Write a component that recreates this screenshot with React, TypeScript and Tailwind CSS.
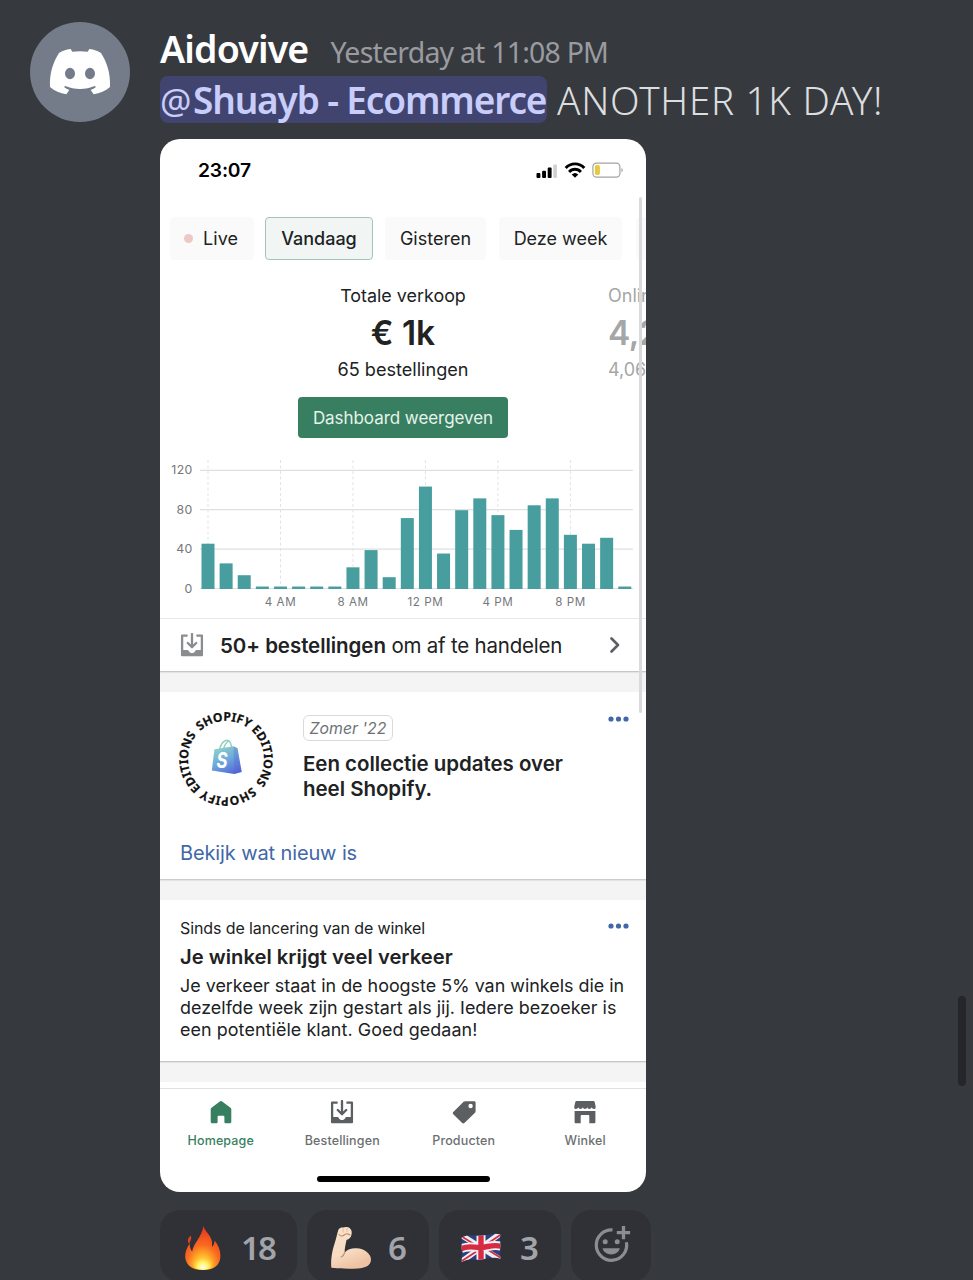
import type { ReactNode } from "react";

const hourly = [46, 26, 14, 2.5, 2.5, 2.5, 2.5, 2.5, 22, 39.5, 12, 72, 104, 36, 80, 92, 75, 60, 85, 92, 55, 46, 52, 2.5];
const hourLabels = [
  { hour: 4, label: "4 AM" },
  { hour: 8, label: "8 AM" },
  { hour: 12, label: "12 PM" },
  { hour: 16, label: "4 PM" },
  { hour: 20, label: "8 PM" },
];

function DiscordLogo() {
  return (
    <svg width="72" height="60" viewBox="0 0 216 180">
      <path
        fill="#fff"
        fillRule="evenodd"
        d="M80 21C65 23 55 27 45 33C28 60 16 92 18 135C32 147 48 153 67 157L76 144C70 142 65 139 60 135L64 132C92 144 124 144 152 132L156 135C151 139 146 142 140 144L149 157C168 153 184 147 198 135C200 92 188 60 171 33C161 27 151 23 136 21L131 29C116 27 100 27 85 29ZM78 77a15 17.500 0 1 1 0 35a15 17.500 0 1 1 0-35zM138 77a15 17.500 0 1 1 0 35a15 17.500 0 1 1 0-35z"
      />
    </svg>
  );
}

function StatusIcons() {
  return (
    <svg width="90" height="18" viewBox="0 0 90 18">
      <rect x="0.5" y="11" width="3.9" height="5" rx="1" />
      <rect x="6.1" y="8.8" width="3.9" height="7.2" rx="1" />
      <rect x="11.700" y="5.500" width="3.9" height="10.500" rx="1" />
      <rect x="17.300" y="2.500" width="3.6" height="13.500" rx="1" fill="#d0d0d0" />
      <g fill="none" stroke="#000" strokeWidth="2.9">
        <path d="M29.700 6a12.6 12.6 0 0 1 18.6 0" />
        <path d="M33.100 9.900a8 8 0 0 1 11.8 0" />
      </g>
      <path d="M35.700 12.500a4.8 4.8 0 0 1 6.6 0l-3.3 3.3z" />
      <rect x="56.900" y="1.100" width="27" height="14" rx="3.6" fill="#fff" stroke="#a4a4a0" strokeWidth="1.2" />
      <rect x="58.900" y="3.100" width="5" height="10" rx="1.8" fill="#e8c83c" />
      <path d="M85.500 6.100v4.2c1.6-.6 1.6-3.6 0-4.2z" fill="#999" />
    </svg>
  );
}

function InboxIcon({ color }: { color: string }) {
  return (
    <svg width="24" height="25" viewBox="0 0 24 25" fill="none">
      <path d="M7.6 2.6H2.100v19.6h19.800V2.6h-5.500" stroke={color} strokeWidth="2.300" strokeLinejoin="round" strokeLinecap="butt" />
      <path d="M1.8 17h5.4c1 0 1.2.5 1.8 1.4.6.9 1.4 1.5 3 1.5s2.400-.6 3-1.500c.6-.9.8-1.400 1.800-1.400h5.400v6H1.800z" fill={color} />
      <path d="M12 1v12M7.800 10l4.200 4.200L16.200 10" stroke={color} strokeWidth="2.300" strokeLinejoin="round" strokeLinecap="round" />
    </svg>
  );
}

function HomeIcon() {
  return (
    <svg width="24" height="25" viewBox="0 0 24 25" fill="#387f61">
      <path d="M11.200 1.200a1.400 1.400 0 0 1 1.600 0l8.700 6.500c.5.400.8 1 .8 1.600v12.500c0 .9-.6 1.500-1.500 1.500h-4.100c-.8 0-1.300-.5-1.300-1.300v-5.100c0-.7-.4-1.100-1.100-1.100H9.700c-.7 0-1.100.4-1.100 1.100V22c0 .8-.5 1.300-1.300 1.300H3.200c-.9 0-1.500-.6-1.500-1.500V9.300c0-.6.300-1.200.8-1.600z" />
    </svg>
  );
}

function TagIcon() {
  return (
    <svg width="24" height="25" viewBox="0 0 24 25">
      <path fillRule="evenodd" fill="#5c5f62" d="M13.200 1.200h9c.8 0 1.400.6 1.400 1.400v8.600c0 .6-.2 1.100-.6 1.500L12.400 23c-.6.600-1.600.600-2.200 0L1.300 14.300c-.7-.7-.7-1.700 0-2.400L11.600 1.800c.4-.4 1-.6 1.600-.6zM18.600 3.800a2.200 2.200 0 1 0 0 4.400 2.200 2.200 0 0 0 0-4.400z" />
    </svg>
  );
}

function StoreIcon() {
  return (
    <svg width="24" height="25" viewBox="0 0 24 25" fill="#5c5f62">
      <path d="M3.500 1h17c.7 0 1.100.4 1.200 1l.9 4.200v1.200c0 1-.8 1.500-1.600 1.500-1.100 0-1.900-.8-2.300-1.700-.5 1-1.200 1.700-2.300 1.700-1.100 0-1.800-.7-2.200-1.700-.4 1-1.100 1.700-2.200 1.700s-1.800-.7-2.200-1.700c-.4 1-1.100 1.700-2.200 1.700S5.700 8.200 5.200 7.200c-.4.900-1.200 1.700-2.300 1.700-.800 0-1.600-.5-1.600-1.500V6.200L2.300 2c.1-.6.5-1 1.200-1z" />
      <path d="M1.600 11h20.800v11c0 .8-.5 1.300-1.300 1.300h-4.800v-7.200c0-.7-.4-1.100-1.100-1.100H8.800c-.7 0-1.100.4-1.100 1.100v7.200H2.900c-.8 0-1.300-.5-1.300-1.300z" />
    </svg>
  );
}

function SalesChart() {
  const x0 = 48;
  const step = 18.12;
  return (
    <svg className="block shrink-0 font-[family-name:Inter,sans-serif]" width="486" height="162" viewBox="0 0 486 162">
      {[120, 80, 40, 0].map((v) => (
        <g key={v}>
          <line x1="40" x2="473" y1={132.500 - v * 0.985} y2={132.500 - v * 0.985} stroke="#dfe0e1" strokeWidth="1.200" />
          <text x="32.500" y={136.500 - v * 0.985} textAnchor="end" fontSize="12.300" letterSpacing="0.300" fill="#74777a">
            {v}
          </text>
        </g>
      ))}
      {[0, 4, 8, 12, 16, 20].map((h) => (
        <line key={h} x1={x0 + h * step} x2={x0 + h * step} y1="4" y2="132" stroke="#e2e3e4" strokeDasharray="3 2.500" />
      ))}
      {hourly.map((v, i) => (
        <rect key={i} x={x0 + i * step - 6.500} y={133 - v * 0.985} width="13" height={v * 0.985} fill="#489e9e" />
      ))}
      {hourLabels.map(({ hour, label }) => (
        <text key={hour} x={x0 + hour * step} y="149.500" textAnchor="middle" fontSize="11.600" letterSpacing="0.550" fill="#74777a">
          {label}
        </text>
      ))}
    </svg>
  );
}

function EditionsBadge() {
  return (
    <svg className="shrink-0" width="100" height="100" viewBox="0 0 100 100">
      <defs>
        <path id="ring-top" d="M24.100 22.100A38 38 0 0 1 75.900 77.900" />
        <path id="ring-bottom" d="M75.900 77.900A38 38 0 0 1 24.100 22.100" />
        <linearGradient id="bag" x1="0.200" y1="0" x2="0.700" y2="1">
          <stop offset="0" stopColor="#8fd6c6" />
          <stop offset="0.500" stopColor="#6fa9dc" />
          <stop offset="1" stopColor="#5468d8" />
        </linearGradient>
      </defs>
      <g className="font-[family-name:'Noto_Sans',sans-serif] font-bold" fontSize="12.200" fill="#111" stroke="#111" strokeWidth="0.200">
        <text>
          <textPath href="#ring-top">SHOPIFY EDITIONS</textPath>
        </text>
        <text>
          <textPath href="#ring-bottom">SHOPIFY EDITIONS</textPath>
        </text>
      </g>
      <g transform="translate(0 -1.200)">
        <path d="M43.500 42c.8-5 4-9.500 7.300-9.500 3.300 0 4.500 3.500 4.800 8M47.500 41.500c.8-4.500 3.500-8 6-8.200" fill="none" stroke="#93d0c0" strokeWidth="1.500" />
        <path d="M38.400 41.500 57.500 38.500l4 2 4.200 23.800-7.500 2L35.800 62.700z" fill="url(#bag)" />
        <path d="m57.500 38.500 4 2 4.200 23.800-7.500 2z" fill="#5262cf" fillOpacity=".3" />
        <text x="40.500" y="60.300" className="font-[family-name:Inter,sans-serif] font-bold italic" fontSize="21" fill="#fff" textLength="11" lengthAdjust="spacingAndGlyphs">
          S
        </text>
      </g>
    </svg>
  );
}

function Dots() {
  return (
    <svg width="22" height="6" viewBox="0 0 22 6" fill="#4167a8">
      <circle cx="4" cy="3" r="2.600" />
      <circle cx="11.500" cy="3" r="2.600" />
      <circle cx="19" cy="3" r="2.600" />
    </svg>
  );
}

function Fire() {
  return (
    <svg width="38" height="46" viewBox="0 0 38 46">
      <defs>
        <radialGradient id="flame" cx="0.500" cy="0.900" r="0.850">
          <stop offset="0" stopColor="#fff45c" />
          <stop offset="0.280" stopColor="#ffb42a" />
          <stop offset="0.550" stopColor="#fa6a20" />
          <stop offset="1" stopColor="#e8371c" />
        </radialGradient>
        <radialGradient id="core" cx="0.500" cy="0.900" r="0.600">
          <stop offset="0" stopColor="#fffef0" />
          <stop offset="0.450" stopColor="#fff15a" />
          <stop offset="1" stopColor="#ffa02a" stopOpacity="0" />
        </radialGradient>
      </defs>
      <path d="M19.500 1c1 5 7 8.500 8.300 15 .5 2.500.2 4.500.2 6 1.500-1.500 2.600-3.500 2.600-6.500 4.200 5 6.200 11 5.700 17C35.800 40.500 29.500 45 19 45S2 40.500 1.200 32.500C.8 27.500 3 22.500 5.500 18.500c.2 3.500 1 6 2.700 8C9.500 18 17.500 12.500 19.500 1z" fill="url(#flame)" />
      <path d="M6.800 10.800c1.500 3.500-1 5-1.200 8.200-2-1.500-3-5.500 1.200-8.200z" fill="#e43d20" />
      <path d="M19.500 23c1.500 4.500 5.500 6 6.200 10 1.500-1 2-2.500 2-4 3.500 6 4.500 15.500-8.700 15.700C6.500 44.500 6.800 35 10 30c.5 2 1 3 2.200 4 .8-4 6-6.500 7.300-11z" fill="url(#core)" />
    </svg>
  );
}

function Muscle() {
  return (
    <svg width="42" height="43" viewBox="0 0 42 43">
      <defs>
        <linearGradient id="skin" x1="0" y1="0" x2="0.400" y2="1">
          <stop offset="0" stopColor="#f9e2cd" />
          <stop offset="0.650" stopColor="#f7dbc2" />
          <stop offset="1" stopColor="#eec3a4" />
        </linearGradient>
      </defs>
      <path d="M8.500 3.500C10 1 13 1.500 15 1.200c2.500-.7 4.500.2 5.500 1.800 1.300 1.500 1.500 3.500 1 5.500-.2 3-2.500 4.500-5 5.500-1 5-2 8.500-1.800 12.500 3-3.500 7-4.500 11.500-4.300C35 22.500 41 28 41 33.500c0 6-6 8.700-13.500 9C17 43 7 42.500 1.300 41.800.5 31 3 22 5.500 14.500 6.500 11.500 7.200 7 8.500 3.500z" fill="url(#skin)" />
      <path d="M9 8.500c2 2.500 4 1.500 5.500.2M13.500 9.500c2-2 4.500-2 6.500-.5M14.700 26.500c-.5 2-1.500 3.500-3.500 4.500" fill="none" stroke="#c98f6c" strokeWidth="1.200" strokeLinecap="round" />
      <path d="M13 2.500v4M17 2v4" stroke="#e0b394" strokeWidth=".8" />
    </svg>
  );
}

function UnionFlag() {
  return (
    <svg width="40" height="30" viewBox="0 0 40 30">
      <defs>
        <clipPath id="cloth">
          <path d="M.6 4.500C8 .5 13 3 20 2.700 27 2.500 32-.5 39.200 1.500l.2 24.300C32 23.500 27 26 20 26.600 13 27.200 8 24.700.8 29z" />
        </clipPath>
      </defs>
      <g clipPath="url(#cloth)">
        <path d="M0 0h40v30H0z" fill="#29417f" />
        <path d="m0 2 40 25M40 0 0 29" stroke="#f0edf0" strokeWidth="5.500" />
        <path d="m0 3 20 12.500M40 25 20 12.500M40 1.500 20 15M0 28.500l20-13" stroke="#d62c43" strokeWidth="1.800" />
        <path d="M20 0v30M0 15.800C8 11.800 13 15 20 14.500s12-3.300 20-1.300" fill="none" stroke="#f4f1f3" strokeWidth="9" />
        <path d="M20 0v30M0 15.800C8 11.800 13 15 20 14.500s12-3.300 20-1.300" fill="none" stroke="#d62c43" strokeWidth="5.400" />
      </g>
    </svg>
  );
}

function AddReaction() {
  return (
    <svg width="38" height="38" viewBox="0 0 38 38" fill="none">
      <path d="M19.500 4.900a15.200 15.200 0 1 0 13.900 12.300" stroke="#8b8d92" strokeWidth="3.200" />
      <path d="M30.500 1v13.200M23.800 7.600h13.300" stroke="#8b8d92" strokeWidth="3.300" />
      <circle cx="12.200" cy="16.700" r="2.500" fill="#8b8d92" />
      <circle cx="24.200" cy="16.700" r="2.500" fill="#8b8d92" />
      <path d="M9.600 23.200h17.200c-1 4-4.500 6.200-8.600 6.200s-7.600-2.200-8.600-6.200z" fill="#8b8d92" />
    </svg>
  );
}

function Reaction({ className, children, count }: { className: string; children: ReactNode; count: string }) {
  return (
    <div className={`flex h-[72px] shrink-0 items-start rounded-[20px] bg-[#2f3136] ${className}`}>
      {children}
      <span className="mt-[18px] font-[family-name:'Noto_Sans',sans-serif] text-[33px] leading-[40px] font-semibold tracking-[-1.800px] text-[#a2a4a9]">{count}</span>
    </div>
  );
}

function NavItem({ label, active, children }: { label: string; active?: boolean; children: ReactNode }) {
  return (
    <div className="flex w-[121.500px] flex-col items-center pt-[11px]">
      {children}
      <span className={`mt-[7px] text-[12.500px] leading-[18px] font-medium tracking-[0.150px] ${active ? "text-[#387f61]" : "text-[#6c6f72]"}`}>{label}</span>
    </div>
  );
}

function PhoneScreen() {
  return (
    <div className="relative flex h-[1053px] w-[486px] shrink-0 flex-col overflow-hidden rounded-[20px] bg-white font-[family-name:Inter,sans-serif] text-[#202223]">
      <div className="flex h-[63px] shrink-0 items-center justify-between pr-[20px] pl-[38px] text-black">
        <span className="text-[19.300px] font-semibold tracking-[-0.200px]">23:07</span>
        <StatusIcons />
      </div>

      <div className="mt-[15px] flex h-[43px] shrink-0 items-stretch pl-[10px] text-[18px] whitespace-nowrap [&>div]:flex [&>div]:shrink-0 [&>div]:items-center [&>div]:justify-center [&>div]:rounded-[4px]">
        <div className="w-[84px] gap-[10px] bg-[#fafafa] pr-[2px]">
          <span className="size-[9px] rounded-full bg-[#ecc8c6]" />
          <span>Live</span>
        </div>
        <div className="ml-[11px] w-[108px] border border-[#a3c3b8] bg-[#f1f6f5] font-medium">Vandaag</div>
        <div className="ml-[12px] w-[101px] bg-[#fafafa]">Gisteren</div>
        <div className="ml-[13px] w-[123px] bg-[#fafafa]">Deze week</div>
        <div className="ml-[14px] w-[80px] bg-[#fafafa]" />
      </div>

      <div className="flex h-[137px] shrink-0 whitespace-nowrap">
        <div className="ml-[38px] flex w-[410px] shrink-0 flex-col items-center pt-[24px]">
          <span className="text-[17.900px] leading-[24px]">Totale verkoop</span>
          <span className="mt-[5px] text-[33.500px] leading-[40px] font-semibold">€ 1k</span>
          <span className="mt-[4px] text-[18.100px] leading-[24px]">65 bestellingen</span>
        </div>
        <div className="flex w-[120px] shrink-0 flex-col pt-[24px] text-[#a5a6a7]">
          <span className="text-[18px] leading-[24px]">Online</span>
          <span className="mt-[5px] text-[33.500px] leading-[40px] font-semibold tracking-[-0.500px]">4,2%</span>
          <span className="mt-[5px] text-[18px] leading-[24px]">4,06%</span>
        </div>
      </div>

      <button className="ml-[138px] h-[41px] w-[210px] shrink-0 rounded-[4px] bg-[#387f61] pt-[2px] text-[17px] tracking-[-0.050px] text-[#e6f3ec]">Dashboard weergeven</button>

      <div className="mt-[18px] h-[162px] shrink-0">
        <SalesChart />
      </div>

      <div className="flex h-[54px] shrink-0 items-center border-t border-b border-[#e8e8e9] border-b-[#c6c7c8] pr-[26px] pl-[20px]">
        <InboxIcon color="#8a8c8f" />
        <span className="ml-[16px] pt-[2px] text-[20.500px] tracking-[-0.220px]">
          <b className="font-semibold tracking-[-0.060px]">50+ bestellingen</b> om af te handelen
        </span>
        <svg className="ml-auto" width="10" height="16" viewBox="0 0 10 16" fill="none">
          <path d="m1.500 1.500 6.500 6.500-6.500 6.500" stroke="#5c5f62" strokeWidth="2.600" strokeLinecap="round" strokeLinejoin="round" />
        </svg>
      </div>
      <div className="h-[20px] shrink-0 bg-[#f4f4f4] shadow-[inset_0_1px_1px_#e2e3e4]" />

      <div className="flex h-[188px] shrink-0 flex-col border-b border-[#cbcccd] pr-[17px]">
        <div className="flex h-[135px]">
          <div className="pt-[17px] pl-[16px]">
            <EditionsBadge />
          </div>
          <div className="ml-[27px] flex flex-col items-start pt-[23px]">
            <span className="flex h-[26px] w-[90px] items-center justify-center rounded-[6px] border border-[#d9dadb] pt-[1px] text-[15.800px] text-[#6d7175] italic">Zomer '22</span>
            <div className="mt-[10px] text-[20.500px] leading-[25px] font-semibold tracking-[-0.040px] whitespace-nowrap">
              Een collectie updates over
              <br />
              heel Shopify.
            </div>
          </div>
          <div className="ml-auto pt-[24px]">
            <Dots />
          </div>
        </div>
        <a className="mt-[13px] ml-[20px] text-[20px] leading-[26px] tracking-[-0.120px] text-[#4167a8]">Bekijk wat nieuw is</a>
      </div>
      <div className="h-[20px] shrink-0 bg-[#f4f4f4] shadow-[inset_0_1px_1px_#e2e3e4]" />

      <div className="flex h-[162px] shrink-0 justify-between border-b border-[#c6c7c8] pr-[17px] pl-[20px] whitespace-nowrap">
        <div className="pt-[17px]">
          <div className="text-[16px] leading-[22px] tracking-[-0.100px]">Sinds de lancering van de winkel</div>
          <div className="mt-[4px] text-[20.200px] leading-[27px] font-semibold tracking-[0.020px]">Je winkel krijgt veel verkeer</div>
          <div className="mt-[5px] w-0 text-[17.900px] leading-[22.200px]">
            Je verkeer staat in de hoogste 5% van winkels die in
            <br />
            <span className="tracking-[0.030px]">dezelfde week zijn gestart als jij. Iedere bezoeker is</span>
            <br />
            <span className="tracking-[0.080px]">een potentiële klant. Goed gedaan!</span>
          </div>
        </div>
        <div className="pt-[23px]">
          <Dots />
        </div>
      </div>
      <div className="h-[20px] shrink-0 bg-[#f4f4f4] shadow-[inset_0_1px_1px_#e2e3e4]" />

      <div className="mt-[6px] flex grow flex-col border-t-[1.500px] border-[#e1e2e3]">
        <div className="flex">
          <NavItem label="Homepage" active>
            <HomeIcon />
          </NavItem>
          <NavItem label="Bestellingen">
            <InboxIcon color="#5c5f62" />
          </NavItem>
          <NavItem label="Producten">
            <TagIcon />
          </NavItem>
          <NavItem label="Winkel">
            <StoreIcon />
          </NavItem>
        </div>
        <div className="mt-auto mb-[10px] h-[6px] w-[173px] self-center rounded-full bg-black" />
      </div>

      <div className="absolute top-[58px] right-[4px] h-[516px] w-[3px] rounded-full bg-[#d9dadc]" />
    </div>
  );
}

export default function App() {
  return (
    <div className="relative flex h-[1280px] w-[973px] overflow-hidden bg-[#36393e] font-[family-name:'Noto_Sans',sans-serif]">
      <div className="mt-[22px] ml-[30px] flex size-[100px] shrink-0 items-center justify-center rounded-full bg-[#747c8a]">
        <DiscordLogo />
      </div>
      <div className="ml-[30px] flex flex-col items-start">
        <div className="flex h-[76px] shrink-0 items-baseline pt-[22px] whitespace-nowrap">
          <span className="text-[37.500px] leading-[54px] font-semibold tracking-[-0.850px] text-white">Aidovive</span>
          <span className="ml-[22px] text-[28.500px] tracking-[-0.800px] text-[#999ba0]">Yesterday at 11:08 PM</span>
        </div>
        <div className="flex h-[63px] shrink-0 items-start text-[37px] leading-[48px] whitespace-nowrap">
          <span className="h-[47px] w-[387px] rounded-[8px] bg-[#41446f] font-semibold tracking-[-1.150px] text-[#c8cdfb]">
            <span className="inline-block w-[33px] text-[35px] font-normal tracking-normal">@</span>Shuayb - Ecommerce
          </span>
          <span className="ml-[10px] text-[38.500px] font-light tracking-[0.750px] text-[#dcddde]">ANOTHER 1K DAY!</span>
        </div>
        <PhoneScreen />
        <div className="mt-[18px] flex shrink-0">
          <Reaction className="w-[137px] gap-[19px] pl-[24px]" count="18">
            <div className="mt-[15px]">
              <Fire />
            </div>
          </Reaction>
          <Reaction className="ml-[10px] w-[122px] gap-[16px] pl-[23px]" count="6">
            <div className="mt-[16px]">
              <Muscle />
            </div>
          </Reaction>
          <Reaction className="ml-[10px] w-[122px] gap-[19px] pl-[22px]" count="3">
            <div className="mt-[23px]">
              <UnionFlag />
            </div>
          </Reaction>
          <div className="ml-[10px] h-[72px] w-[80px] rounded-[20px] bg-[#2f3136] pt-[15px] pl-[22px]">
            <AddReaction />
          </div>
        </div>
      </div>
      <div className="absolute top-[996px] right-[7px] h-[90px] w-[8px] rounded-full bg-[#24262a]" />
    </div>
  );
}
